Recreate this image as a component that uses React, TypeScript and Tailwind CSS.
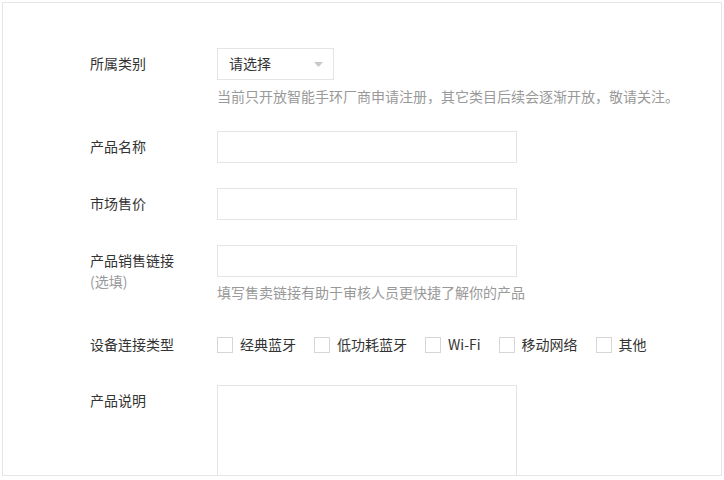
import React from 'react';

const connTypes = ['经典蓝牙', '低功耗蓝牙', 'Wi-Fi', '移动网络', '其他'];

const Label: React.FC<{ text: string; sub?: string }> = ({ text, sub }) => (
  <div className="relative -top-px w-[127px] shrink-0">
    <div className="leading-8 text-[#333]">{text}</div>
    {sub && <div className="-mt-[5px] leading-5 text-[#999]">{sub}</div>}
  </div>
);

const TextInput: React.FC = () => (
  <input type="text" className="block h-8 w-[300px] border border-[#e4e4e4] bg-white px-3 outline-none" />
);

export default function App() {
  return (
    <div className="h-[480px] w-[724px] bg-white p-[2px]">
      <div
        className="h-[474px] w-[720px] overflow-hidden border border-[#e6e6e6] pl-[87px] pt-[45px] text-[14px]"
        style={{ fontFamily: '"Noto Sans CJK SC", "Noto Sans", sans-serif' }}
      >
        {/* 所属类别 */}
        <div className="flex">
          <Label text="所属类别" />
          <div>
            <div className="flex h-8 w-[117px] items-center justify-between border border-[#e4e4e4] pl-[11px] pr-[10px] text-[#333]">
              <span className="relative -top-px">请选择</span>
              <svg width="9" height="5" viewBox="0 0 9 5">
                <path d="M0 0h9L4.5 5z" fill="#c8c8c8" />
              </svg>
            </div>
            <p className="relative -top-px mt-[7px] leading-5 text-[#999]">
              当前只开放智能手环厂商申请注册，其它类目后续会逐渐开放，敬请关注。
            </p>
          </div>
        </div>

        {/* 产品名称 */}
        <div className="mt-[24px] flex">
          <Label text="产品名称" />
          <TextInput />
        </div>

        {/* 市场售价 */}
        <div className="mt-[25px] flex">
          <Label text="市场售价" />
          <TextInput />
        </div>

        {/* 产品销售链接 */}
        <div className="mt-[25px] flex">
          <Label text="产品销售链接" sub="(选填)" />
          <div>
            <TextInput />
            <p className="relative -top-px mt-[6px] leading-5 text-[#999]">填写售卖链接有助于审核人员更快捷了解你的产品</p>
          </div>
        </div>

        {/* 设备连接类型 */}
        <div className="mt-[26px] flex">
          <Label text="设备连接类型" />
          <div className="flex h-8 items-center gap-[18px]">
            {connTypes.map((t) => (
              <label key={t} className="flex items-center gap-[7px] text-[#333]">
                <span className="block h-4 w-4 border border-[#d6d6d6] bg-white" />
                <span className="relative -top-px">{t}</span>
              </label>
            ))}
          </div>
        </div>

        {/* 产品说明 */}
        <div className="mt-[24px] flex">
          <Label text="产品说明" />
          <textarea className="block h-[140px] w-[300px] resize-none border border-[#e4e4e4] bg-white outline-none" />
        </div>
      </div>
    </div>
  );
}
